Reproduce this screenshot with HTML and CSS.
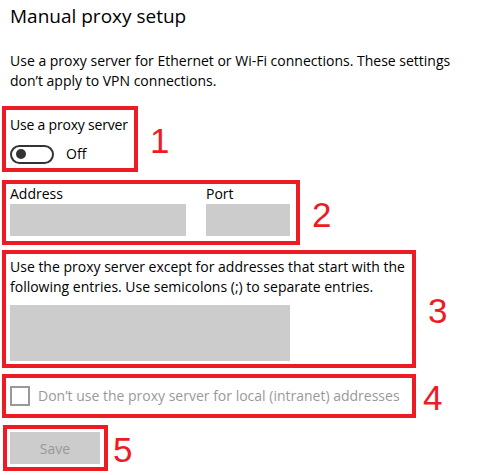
FILE: index.html
```html
<!DOCTYPE html>
<html lang="en">
<head>
    <meta charset="UTF-8">
    <meta name="viewport" content="width=device-width, initial-scale=1.0">
    <title>Manual proxy setup</title>
    <link rel="stylesheet" href="styles.css">
</head>
<body>
    <main class="page">
        <h1 class="title">Manual proxy setup</h1>
        <p class="intro">Use a proxy server for Ethernet or Wi-Fi connections. These settings don’t apply to VPN connections.</p>

        <div class="row row-1">
            <section class="callout callout-1">
                <div class="label">Use a proxy server</div>
                <div class="toggle-line">
                    <span class="toggle"><span class="knob"></span></span>
                    <span class="toggle-text">Off</span>
                </div>
            </section>
            <span class="num">1</span>
        </div>

        <div class="row row-2">
            <section class="callout callout-2">
                <div class="field field-address">
                    <div class="label">Address</div>
                    <div class="input"></div>
                </div>
                <div class="field field-port">
                    <div class="label">Port</div>
                    <div class="input"></div>
                </div>
            </section>
            <span class="num">2</span>
        </div>

        <div class="row row-3">
            <section class="callout callout-3">
                <p class="label">Use the proxy server except for addresses that start with the following entries. Use semicolons (;) to separate entries.</p>
                <div class="input input-tall"></div>
            </section>
            <span class="num">3</span>
        </div>

        <div class="row row-4">
            <section class="callout callout-4">
                <span class="checkbox"></span>
                <span class="check-text">Don’t use the proxy server for local (intranet) addresses</span>
            </section>
            <span class="num">4</span>
        </div>

        <div class="row row-5">
            <section class="callout callout-5">
                <button class="save" disabled>Save</button>
            </section>
            <span class="num">5</span>
        </div>
    </main>
</body>
</html>
```

FILE: styles.css
```css
body {
    margin: 0;
    background-color: #ffffff;
    color: #000000;
    font-family: 'Open Sans', 'Noto Sans', sans-serif;
    font-size: 14px;
    line-height: 20px;
}

.page {
    padding: 0 0 0 2px;
}

.title {
    margin: 0;
    padding: 4px 0 0 8px;
    font-size: 19px;
    font-weight: 400;
    line-height: 24px;
}

.intro {
    margin: 23px 0 0;
    padding-left: 8px;
    width: 460px;
}

/* annotated rows */
.row {
    display: flex;
    align-items: center;
}

.row-1 { margin-top: 15px; }
.row-2 { margin-top: 8px; }
.row-3 { margin-top: 5px; }
.row-4 { margin-top: 6px; }
.row-5 { margin-top: 7px; }

.callout {
    box-sizing: border-box;
    border: 4px solid #ed1c24;
    padding: 0 4px;
}

.num {
    color: #ed1c24;
    font-family: 'Liberation Sans', Arial, sans-serif;
    font-size: 35px;
    line-height: 40px;
    margin-top: 4px;
    margin-left: 12px;
}

.callout-1 {
    width: 136px;
    height: 66px;
    padding-top: 5px;
    white-space: nowrap;
}

.callout-1 .label {
    letter-spacing: -0.2px;
}

.toggle-line {
    display: flex;
    align-items: center;
    margin-top: 9px;
}

.toggle {
    box-sizing: border-box;
    width: 44px;
    height: 19px;
    border: 2px solid #333333;
    border-radius: 10px;
    display: flex;
    align-items: center;
    padding-left: 4px;
}

.knob {
    width: 10px;
    height: 10px;
    border-radius: 50%;
    background-color: #333333;
}

.toggle-text {
    margin-left: 12px;
}

.callout-2 {
    display: flex;
    gap: 20px;
    width: 298px;
    height: 65px;
}

.input {
    height: 32px;
    background-color: #cccccc;
}

.field-address { width: 176px; }
.field-port { width: 84px; }

.callout-3 {
    width: 414px;
    height: 118px;
    padding-top: 3px;
}

.callout-3 .label {
    margin: 0;
}

.input-tall {
    width: 280px;
    height: 56px;
    margin-top: 8px;
}

.callout-4 {
    display: flex;
    align-items: center;
    width: 414px;
    height: 44px;
    color: #999999;
    white-space: nowrap;
}

.checkbox {
    box-sizing: border-box;
    flex: none;
    width: 20px;
    height: 20px;
    border: 2px solid #999999;
}

.check-text {
    margin-left: 8px;
}

.callout-5 {
    width: 105px;
    height: 46px;
    padding: 3px 4px 0 3px;
    margin-left: 1px;
}

.save {
    width: 90px;
    height: 32px;
    border: none;
    background-color: #cccccc;
    color: #999999;
    font-family: inherit;
    font-size: 14px;
}

.row-4 .num { margin-left: 7px; }
.row-5 .num { margin-left: 5px; }
```
